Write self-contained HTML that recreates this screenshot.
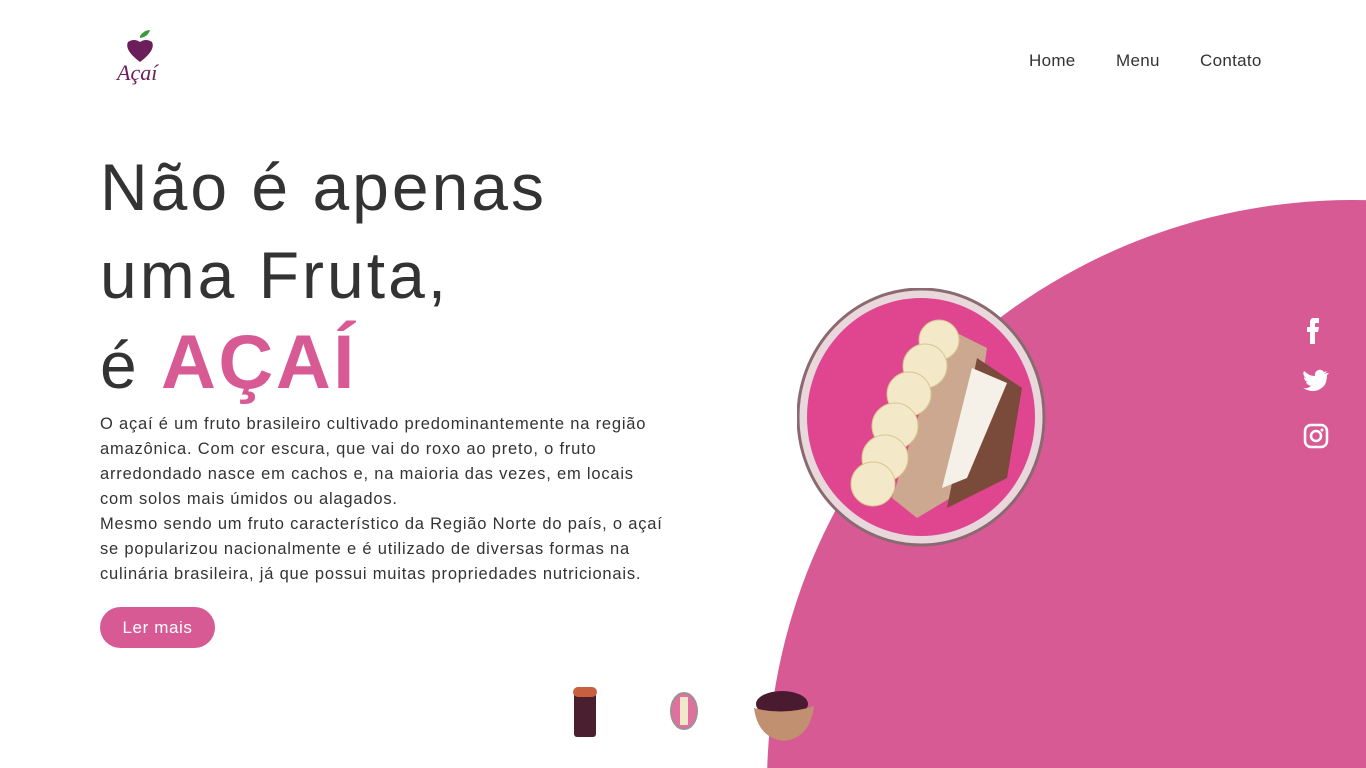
<!DOCTYPE html>
<html><head><meta charset="utf-8"><style>
*{margin:0;padding:0;box-sizing:border-box}
html,body{width:1366px;height:768px;overflow:hidden}
body{background:#fff;font-family:"Liberation Sans",sans-serif;color:#333;position:relative}
.clip{position:absolute;left:0;top:0;width:1366px;height:768px;overflow:hidden}
.circle{position:absolute;left:767px;top:200px;width:1170px;height:1170px;border-radius:50%;background:#d85a94}
nav{position:absolute;top:51px;font-size:17px;color:#333;letter-spacing:0.3px}
h1{position:absolute;left:100px;top:143px;font-size:66px;font-weight:400;line-height:88px;color:#333;letter-spacing:3px;white-space:nowrap}
h1 b{color:#d85a94;font-weight:900;font-size:76px;letter-spacing:2.5px}
p{position:absolute;left:100px;top:412px;font-size:16.5px;line-height:25px;color:#333;white-space:nowrap;letter-spacing:0.8px}
.btn{position:absolute;left:100px;top:607px;width:115px;height:41px;border-radius:21px;background:#d85a94;color:#fff;font-size:17px;text-align:center;line-height:41px;letter-spacing:0.6px}
</style></head><body>
<div class="clip"><div class="circle"></div></div>
<svg style="position:absolute;left:112px;top:28px" width="56" height="62" viewBox="0 0 56 62">
<path d="M28 8 q4-6 10-6 q-2 7-10 8z" fill="#3a9a3a"/>
<path d="M16 14 q6-4 12 0 q6-4 12 0 q4 8-12 20 q-16-12-12-20z" fill="#6b1e5a"/>
<text x="5" y="52" font-family="Liberation Serif,serif" font-style="italic" font-size="22" fill="#6b1e5a">Açaí</text>
</svg>
<nav style="left:1029px">Home</nav>
<nav style="left:1116px">Menu</nav>
<nav style="left:1200px">Contato</nav>
<h1>Não é apenas<br>uma Fruta,<br>é <b>AÇAÍ</b></h1>
<p>O açaí é um fruto brasileiro cultivado predominantemente na região<br>amazônica. Com cor escura, que vai do roxo ao preto, o fruto<br>arredondado nasce em cachos e, na maioria das vezes, em locais<br>com solos mais úmidos ou alagados.<br>Mesmo sendo um fruto característico da Região Norte do país, o açaí<br>se popularizou nacionalmente e é utilizado de diversas formas na<br>culinária brasileira, já que possui muitas propriedades nutricionais.</p>
<div class="btn">Ler mais</div>
<svg style="position:absolute;left:797px;top:288px" width="250" height="260" viewBox="0 0 250 260">
<ellipse cx="124" cy="129" rx="123" ry="128" fill="#e8d8dc" stroke="#8a6a70" stroke-width="3"/>
<ellipse cx="124" cy="129" rx="114" ry="119" fill="#e0468f"/>
<path d="M150 40 L190 60 L170 200 L120 230 L95 210z" fill="#c8c090" opacity=".8"/>
<path d="M180 70 L225 100 L210 190 L150 220z" fill="#7a4a3a"/>
<path d="M175 80 L210 95 L170 190 L145 200z" fill="#f5f0e8"/>
<g fill="#f3e8c8" stroke="#d8c890">
<circle cx="142" cy="52" r="20"/><circle cx="128" cy="78" r="22"/><circle cx="112" cy="106" r="22"/><circle cx="98" cy="138" r="23"/><circle cx="88" cy="170" r="23"/><circle cx="76" cy="196" r="22"/></g>
</svg>
<svg style="position:absolute;left:570px;top:685px" width="30" height="54"><rect x="4" y="8" width="22" height="44" rx="3" fill="#4a2030"/><rect x="3" y="2" width="24" height="10" rx="5" fill="#c86040"/></svg>
<svg style="position:absolute;left:669px;top:691px" width="30" height="40"><ellipse cx="15" cy="20" rx="13" ry="18" fill="#e070a0" stroke="#a09090" stroke-width="2"/><rect x="11" y="6" width="8" height="28" fill="#f0e8c8"/></svg>
<svg style="position:absolute;left:752px;top:688px" width="64" height="56"><ellipse cx="30" cy="16" rx="26" ry="13" fill="#4a1a30"/><path d="M2 20 Q32 28 62 18 Q58 50 32 53 Q6 50 2 20z" fill="#c09070"/></svg>
<svg style="position:absolute;left:1303px;top:314px" width="26" height="136" fill="#fff">
<path d="M10 4 h6 v5 h-3 q-1 0-1 1 v3 h4 l-1 5 h-3 v12 h-5 v-12 h-3 v-5 h3 v-4 q0-5 3-5z"/>
<path d="M24 59 q-2 1-3 1 q2-1 3-3 q-2 1-3 1 a5 5 0 0 0-9 4 q-6 0-11-5 q-2 4 2 7 q-1 0-2-1 q0 4 4 5 q-1 0-2 0 q1 3 5 4 q-4 3-8 2 q12 7 21-2 q3-4 3-11 q1-1 2-2z"/>
<rect x="2" y="111" width="22" height="22" rx="6" fill="none" stroke="#fff" stroke-width="2.5"/><circle cx="13" cy="122" r="5" fill="none" stroke="#fff" stroke-width="2.5"/><circle cx="19" cy="116" r="1.5"/>
</svg>
</body></html>
